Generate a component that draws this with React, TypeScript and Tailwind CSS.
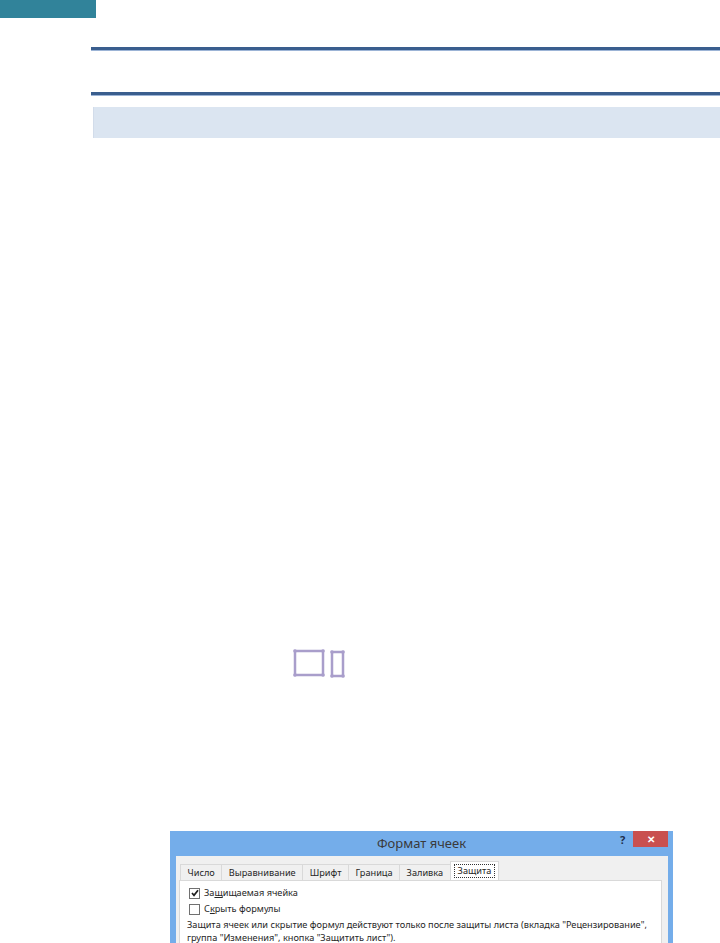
const tabs = ["Число", "Выравнивание", "Шрифт", "Граница", "Заливка"]

const Rule = () => (
    <div className="ml-[91px]">
        <div className="h-[3px] bg-[#3a5e8e]" />
        <div className="h-[1px] bg-[#9cb4d6]" />
    </div>
)

const Checkbox = ({ checked }: { checked?: boolean }) => (
    <div className="w-[11px] h-[11px] border border-[#707070] bg-white flex items-center justify-center shrink-0">
        {checked && (
            <svg width="8" height="8" viewBox="0 0 8 8">
                <path d="M1 4 L3 6.3 L7 1.2" fill="none" stroke="#1f1f1f" strokeWidth="1.7" />
            </svg>
        )}
    </div>
)

const App = () => {
    return (
        <div className="w-[720px] h-[943px] bg-white overflow-hidden font-['Noto_Sans',sans-serif]">
            <div className="w-[96px] h-[18px] bg-[#31839a]" />

            <div className="mt-[29px]">
                <Rule />
            </div>
            <div className="mt-[41px]">
                <Rule />
            </div>
            <div className="ml-[93px] mt-[11px] h-[31px] bg-[#dbe5f1] border-l border-[#d2dcea]" />

            {/* shapes */}
            <div className="ml-[292px] mt-[511px]">
                <svg width="56" height="30" viewBox="0 0 56 30">
                    <g fill="none" stroke="#a99ecb" strokeWidth="2.5">
                        <rect x="3" y="2" width="28" height="24" />
                        <rect x="40" y="3" width="11" height="24" />
                    </g>
                    <g fill="#a99ecb">
                        <circle cx="3" cy="2" r="1.8" />
                        <circle cx="31" cy="2" r="1.8" />
                        <circle cx="3" cy="26" r="1.8" />
                        <circle cx="31" cy="26" r="1.8" />
                        <circle cx="40" cy="3" r="1.8" />
                        <circle cx="51" cy="3" r="1.8" />
                        <circle cx="40" cy="27" r="1.8" />
                        <circle cx="51" cy="27" r="1.8" />
                    </g>
                </svg>
            </div>

            {/* dialog */}
            <div className="ml-[170px] mt-[152px] w-[503px] bg-[#74adea] text-[#262626]">
                <div className="h-[25px] flex items-start">
                    <div className="w-[61px]" />
                    <div className="flex-1 text-center text-[13px] leading-[25px] text-[#3a3a3a]">Формат ячеек</div>
                    <div className="w-[61px] flex items-start">
                        <div className="w-[21px] text-[11px] font-bold text-[#1f2d4a] leading-[16px] pt-[1px] text-center">?</div>
                        <div className="w-[35px] h-[16px] bg-[#c9504f] text-white flex items-center justify-center text-[10px] font-bold">✕</div>
                    </div>
                </div>
                <div className="ml-[6px] mr-[5px] bg-[#f0f0f0] pt-[5px] pl-[3px] pr-[6px] h-[100px]">
                    <div className="flex items-end pl-[1px] text-[9.2px] leading-[13px]">
                        {tabs.map((t) => (
                            <div key={t} className="px-[6.5px] h-[16px] border border-b-0 border-[#d9d9d9] -ml-[1px] first:ml-0 bg-[#f0f0f0] flex items-center">
                                {t}
                            </div>
                        ))}
                        <div className="h-[19px] px-[3px] border border-b-0 border-[#d9d9d9] -ml-[1px] bg-white flex items-center">
                            <span className="border border-dotted border-[#333] px-[3px] leading-[12px]">Защита</span>
                        </div>
                    </div>
                    <div className="bg-white border border-[#d9d9d9] h-[80px] pl-[7px] pt-[5px] text-[9.2px] leading-[14px] whitespace-nowrap">
                        <div className="flex items-center gap-[4px] pl-[2px] h-[14px]">
                            <Checkbox checked />
                            <span>За<u>щ</u>ищаемая ячейка</span>
                        </div>
                        <div className="flex items-center gap-[4px] pl-[2px] h-[14px] mt-[2px]">
                            <Checkbox />
                            <span>С<u>к</u>рыть формулы</span>
                        </div>
                        <div className="mt-[2px] leading-[13px]">
                            <div>Защита ячеек или скрытие формул действуют только после защиты листа (вкладка "Рецензирование",</div>
                            <div>группа "Изменения", кнопка "Защитить лист").</div>
                        </div>
                    </div>
                </div>
            </div>
        </div>
    )
}

export default App
